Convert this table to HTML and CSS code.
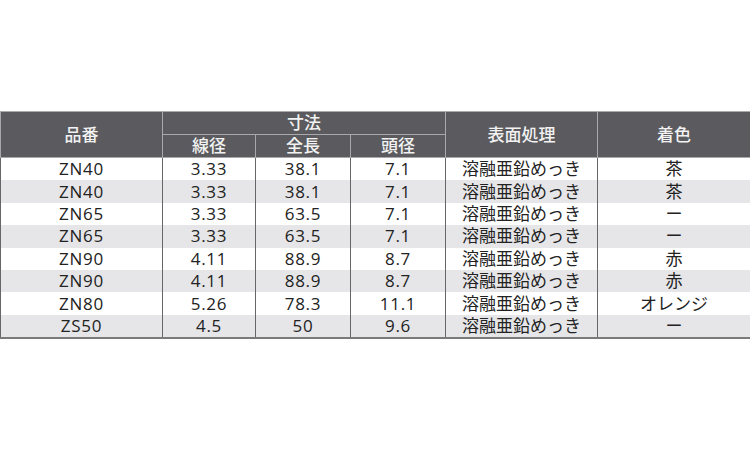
FILE: index.html
```html
<!DOCTYPE html>
<html lang="ja">
<head>
<meta charset="utf-8">
<title>仕様表</title>
<link rel="stylesheet" href="styles.css">
</head>
<body>
<div class="page">
<table class="spec">
<colgroup>
<col class="c1"><col class="c2"><col class="c3"><col class="c4"><col class="c5"><col class="c6">
</colgroup>
<thead>
<tr>
<th rowspan="2">品番</th>
<th colspan="3">寸法</th>
<th rowspan="2">表面処理</th>
<th rowspan="2">着色</th>
</tr>
<tr>
<th>線径</th>
<th>全長</th>
<th>頭径</th>
</tr>
</thead>
<tbody>
<tr><td class="lat">ZN40</td><td class="num l1">3.33</td><td class="num l2">38.1</td><td class="num r">7.1</td><td class="fin">溶融亜鉛めっき</td><td>茶</td></tr>
<tr><td class="lat">ZN40</td><td class="num l1">3.33</td><td class="num l2">38.1</td><td class="num r">7.1</td><td class="fin">溶融亜鉛めっき</td><td>茶</td></tr>
<tr><td class="lat">ZN65</td><td class="num l1">3.33</td><td class="num l2">63.5</td><td class="num r">7.1</td><td class="fin">溶融亜鉛めっき</td><td>ー</td></tr>
<tr><td class="lat">ZN65</td><td class="num l1">3.33</td><td class="num l2">63.5</td><td class="num r">7.1</td><td class="fin">溶融亜鉛めっき</td><td>ー</td></tr>
<tr><td class="lat">ZN90</td><td class="num l1">4.11</td><td class="num l2">88.9</td><td class="num r">8.7</td><td class="fin">溶融亜鉛めっき</td><td>赤</td></tr>
<tr><td class="lat">ZN90</td><td class="num l1">4.11</td><td class="num l2">88.9</td><td class="num r">8.7</td><td class="fin">溶融亜鉛めっき</td><td>赤</td></tr>
<tr><td class="lat">ZN80</td><td class="num l1">5.26</td><td class="num l2">78.3</td><td class="num r">11.1</td><td class="fin">溶融亜鉛めっき</td><td>オレンジ</td></tr>
<tr><td class="lat">ZS50</td><td class="num l1">4.5</td><td class="num l2">50</td><td class="num r">9.6</td><td class="fin">溶融亜鉛めっき</td><td>ー</td></tr>
</tbody>
</table>
</div>
</body>
</html>
```
FILE: styles.css
```css
html, body {
  margin: 0;
  padding: 0;
  background: #ffffff;
}
.page {
  padding-top: 111px;
}
.spec {
  width: 750px;
  table-layout: fixed;
  border-collapse: collapse;
  font-family: "Open Sans", "Noto Sans CJK JP", sans-serif;
  font-size: 17px;
  color: #222222;
}
.c1 { width: 162px; }
.c2 { width: 93px; }
.c3 { width: 95px; }
.c4 { width: 95px; }
.c5 { width: 152px; }
.c6 { width: 153px; }

.spec th {
  background: #5b5b5f;
  color: #f2f2f2;
  font-weight: 500;
  border: 1px solid #a9a9ab;
  height: 22px;
  padding: 0;
  line-height: 20px;
  text-align: center;
}
.spec td {
  height: 22.4px;
  padding: 0;
  line-height: 20px;
  text-align: center;
  border-left: 1px solid #666666;
  border-right: 1px solid #666666;
  white-space: nowrap;
}
.spec tbody tr:nth-child(even) td {
  background: #e6e6e8;
}
.spec tbody tr:last-child td {
  border-bottom: 2px solid #7a7a7a;
}
.lat, .num {
  letter-spacing: 0.7px;
}
.l1 {
  text-align: left;
  padding-left: 28px;
}
.l2 {
  text-align: left;
  padding-left: 30px;
}
.r {
  text-align: right;
  padding-right: 30px;
}
.fin {
  text-align: left;
  padding-left: 15px;
}
```
